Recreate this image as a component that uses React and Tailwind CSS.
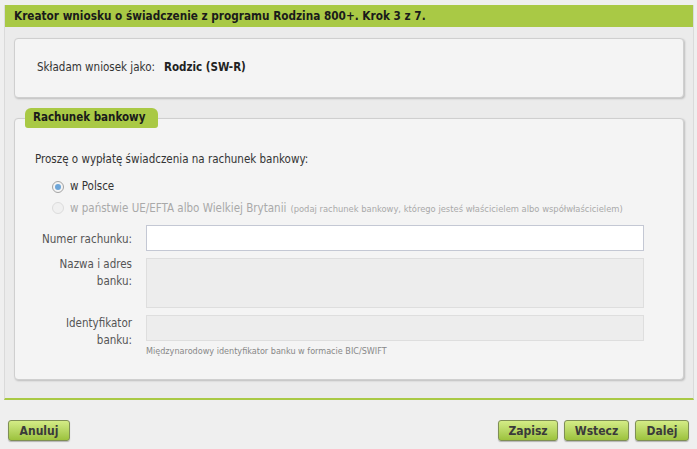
import React from 'react';

const font = { fontFamily: '"DejaVu Sans Condensed", "DejaVu Sans", Tahoma, sans-serif' };

const Button = ({ children, className = '' }) => (
    <button
        className={`h-[21px] rounded-[3px] border border-[#7f8f55] bg-gradient-to-b from-[#d4ec86] to-[#9cc23c] text-[12px] font-bold text-[#3a3a3a] shadow-[0_1px_1px_rgba(0,0,0,0.25)] ${className}`}
    >
        {children}
    </button>
);

const Radio = ({ checked, disabled, children, note }) => (
    <label className="flex items-center gap-[6px]">
        <span
            className={`flex h-[12px] w-[12px] items-center justify-center rounded-full border ${
                disabled ? 'border-[#dcdcdc] bg-[#f0f0f0]' : 'border-[#a3a3a3] bg-[#f4f4f4]'
            }`}
        >
            {checked && <span className="h-[6px] w-[6px] rounded-full bg-[#6da5d8]"></span>}
        </span>
        <span className={disabled ? 'text-[#a9a9a9]' : 'text-[#333]'}>
            {children}
            {note && <span className="ml-1 text-[9.3px]">{note}</span>}
        </span>
    </label>
);

const FieldRow = ({ label, children, className = '', labelClass = '' }) => (
    <div className={`flex items-start ${className}`}>
        <div className={`w-[131px] pr-[14px] text-right text-[11.5px] leading-[17px] text-[#555] ${labelClass}`}>{label}</div>
        <div className="flex-1">{children}</div>
    </div>
);

export default function App() {
    return (
        <div className="h-[449px] w-[697px] bg-[#efefef] pt-[5px] text-[11.5px]" style={font}>
            <div className="ml-[4px] mr-[3px] border-x border-b-2 border-x-[#dadada] border-b-[#a9c945] bg-[#ebebeb] pb-[18px]">
                <div className="h-[22px] bg-[#a9c945] pl-[9px] text-[11.7px] font-bold leading-[22px] text-[#1a1a1a]">
                    Kreator wniosku o świadczenie z programu Rodzina 800+. Krok 3 z 7.
                </div>

                <div className="mx-[9px] mt-[11px] flex h-[60px] items-center rounded-[4px] border border-[#cfcfcf] bg-[#f4f4f4] pl-[22px] shadow-[1px_1px_2px_rgba(0,0,0,0.2)]">
                    <span className="text-[#333]">Składam wniosek jako:</span>
                    <span className="ml-[9px] font-bold text-[#222]">Rodzic (SW-R)</span>
                </div>

                <div className="relative mx-[9px] mt-[20px]">
                    <div className="absolute left-[11px] top-[-10px] flex h-[20px] w-[133px] items-center rounded-t-[6px] rounded-b-[3px] bg-[#a9c945] pl-[8px] font-bold text-[#1a1a1a]">
                        Rachunek bankowy
                    </div>
                    <div className="h-[262px] rounded-[4px] border border-[#cfcfcf] bg-[#f4f4f4] px-[20px] pt-[32px] shadow-[1px_1px_2px_rgba(0,0,0,0.2)]">
                        <div className="text-[#333]">Proszę o wypłatę świadczenia na rachunek bankowy:</div>
                        <div className="ml-[17px] mt-[10px] flex flex-col gap-[4px]">
                            <Radio checked>w Polsce</Radio>
                            <Radio disabled note="(podaj rachunek bankowy, którego jesteś właścicielem albo współwłaścicielem)">
                                w państwie UE/EFTA albo Wielkiej Brytanii
                            </Radio>
                        </div>

                        <div className="mr-[19px] mt-[8px] -ml-[20px]">
                            <FieldRow label="Numer rachunku:" labelClass="pt-[6px]">
                                <div className="h-[26px] border border-[#c4c8d4] bg-white"></div>
                            </FieldRow>
                            <FieldRow label={<>Nazwa i adres<br />banku:</>} className="mt-[7px]" labelClass="-mt-[2px]">
                                <div className="h-[50px] border border-[#dedede] bg-[#ededed]"></div>
                            </FieldRow>
                            <FieldRow label={<>Identyfikator<br />banku:</>} className="mt-[7px]">
                                <div className="h-[26px] border border-[#dedede] bg-[#ededed]"></div>
                                <div className="mt-[4px] text-[9px] text-[#888]">
                                    Międzynarodowy identyfikator banku w formacie BIC/SWIFT
                                </div>
                            </FieldRow>
                        </div>
                    </div>
                </div>
            </div>

            <div className="mt-[20px] flex items-center px-[8px]">
                <Button className="w-[62px]">Anuluj</Button>
                <div className="flex-1"></div>
                <Button className="w-[60px]">Zapisz</Button>
                <Button className="ml-[6px] w-[65px]">Wstecz</Button>
                <Button className="ml-[6px] w-[54px]">Dalej</Button>
            </div>
        </div>
    );
}
